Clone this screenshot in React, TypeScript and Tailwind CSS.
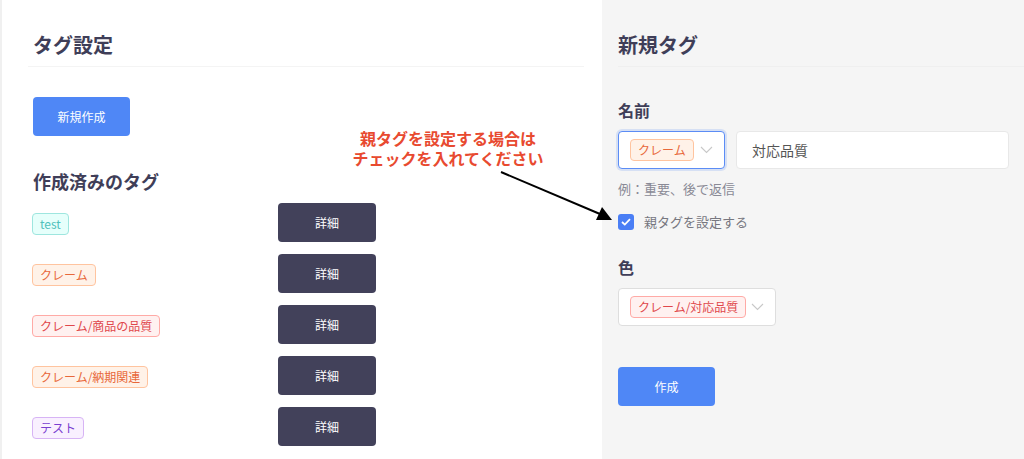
import React from "react";

const FONT = { fontFamily: '"Noto Sans CJK JP", "Noto Sans", sans-serif' };

type TagColor = "cyan" | "volcano" | "red" | "purple" | "gray";

const tagCls: Record<TagColor, string> = {
  cyan: "bg-[#e6fffb] border-[#9ee6df] text-[#4fc1bb]",
  volcano: "bg-[#fff2e8] border-[#ffc49f] text-[#e8683a]",
  red: "bg-[#fff1f0] border-[#ffaaa6] text-[#e0474b]",
  purple: "bg-[#f9f0ff] border-[#d7b4f5] text-[#7a3fd0]",
  gray: "bg-[#fafafa] border-[#e0e0e0] text-[#666]",
};

function Tag({ color, children }: { color: TagColor; children: React.ReactNode }) {
  return (
    <span
      className={`inline-flex items-center h-[22px] px-[7px] rounded-[4px] border text-[12px] leading-none ${tagCls[color]}`}
    >
      {children}
    </span>
  );
}

function Chevron() {
  return (
    <svg width="13" height="8" viewBox="0 0 13 8" fill="none">
      <polyline points="1,1 6.5,6.5 12,1" stroke="#c8c8c8" strokeWidth="1.1" />
    </svg>
  );
}

const rows: { label: string; color: TagColor }[] = [
  { label: "test", color: "cyan" },
  { label: "クレーム", color: "volcano" },
  { label: "クレーム/商品の品質", color: "red" },
  { label: "クレーム/納期関連", color: "volcano" },
  { label: "テスト", color: "purple" },
];

export default function App() {
  return (
    <div className="relative w-[1024px] h-[459px] overflow-hidden flex bg-white" style={FONT}>
      {/* Left panel */}
      <div className="w-[602px] h-full border-l-2 border-[#f0f0f0] pl-[26px] pr-[18px]">
        <div className="h-[67px] pt-[31px] border-b border-[#f4f4f4]">
          <h1 className="pl-[5px] text-[20px] leading-[28px] font-bold text-[#3f3e58]">タグ設定</h1>
        </div>
        <div className="pl-[5px]">
          <button className="mt-[30px] w-[97px] h-[39px] rounded-[4px] bg-[#4f87f6] text-white text-[12px]">
            新規作成
          </button>
          <h2 className="mt-[33px] text-[18px] leading-[24px] font-bold text-[#3f3e58]">作成済みのタグ</h2>
          <div className="mt-[10px] flex flex-col gap-[12px]">
            {rows.map((r) => (
              <div key={r.label} className="flex items-center">
                <div className="w-[246px] -ml-[1px]">
                  <Tag color={r.color}>{r.label}</Tag>
                </div>
                <button className="w-[98px] h-[39px] rounded-[4px] bg-[#42415a] text-white text-[12px]">
                  詳細
                </button>
              </div>
            ))}
            <div className="flex items-center h-[39px]">
              <div className="w-[246px] pl-[2px] pt-[8px]">
                <div className="w-[70px] h-[22px] rounded-[4px] border border-[#e4e4e4] bg-[#fafafa]" />
              </div>
            </div>
          </div>
        </div>
      </div>

      {/* Right panel */}
      <div className="flex-1 h-full bg-[#f5f5f5] pl-[16px]">
        <div className="h-[67px] pt-[31px] border-b border-[#efefef]">
          <h1 className="text-[20px] leading-[28px] font-bold text-[#3f3e58]">新規タグ</h1>
        </div>
        <div className="mt-[32px] text-[16px] leading-[22px] font-bold text-[#3f3e58]">名前</div>
        <div className="mt-[10px] flex gap-[11px]">
          <div className="w-[107px] h-[38px] rounded-[4px] bg-white border border-[#5b8cf5] shadow-[0_0_0_2px_rgba(79,135,246,0.18)] flex items-center pl-[11px] pr-[11px] justify-between">
            <Tag color="volcano">クレーム</Tag>
            <Chevron />
          </div>
          <div className="w-[273px] h-[38px] rounded-[4px] bg-white border border-[#e8e8e8] flex items-center pl-[15px] text-[14px] text-[#555]">
            対応品質
          </div>
        </div>
        <div className="mt-[11px] text-[13px] leading-[18px] text-[#8a8a96]">例：重要、後で返信</div>
        <div className="mt-[15px] flex items-center gap-[10px]">
          <div className="w-[16px] h-[16px] rounded-[3px] bg-[#4a7ef5] flex items-center justify-center">
            <svg width="10" height="8" viewBox="0 0 10 8" fill="none">
              <polyline points="1,4 3.8,6.6 9,1.2" stroke="white" strokeWidth="1.8" />
            </svg>
          </div>
          <span className="text-[13px] leading-[18px] text-[#77777f]">親タグを設定する</span>
        </div>
        <div className="mt-[25px] text-[16px] leading-[22px] font-bold text-[#3f3e58]">色</div>
        <div className="mt-[10px] w-[158px] h-[38px] rounded-[4px] bg-white border border-[#dedede] flex items-center pl-[11px] pr-[11px] justify-between">
          <Tag color="red">クレーム/対応品質</Tag>
          <Chevron />
        </div>
        <button className="mt-[41px] w-[97px] h-[39px] rounded-[4px] bg-[#4f87f6] text-white text-[12px]">
          作成
        </button>
      </div>

      {/* Annotation overlay */}
      <div className="absolute left-[338px] top-[128px] w-[220px] text-center text-[16px] leading-[20px] font-bold text-[#e84a30]">
        <div>親タグを設定する場合は</div>
        <div>チェックを入れてください</div>
      </div>
      <svg className="absolute left-0 top-0 pointer-events-none" width="1024" height="459">
        <line x1="501" y1="172" x2="600" y2="214" stroke="#000" strokeWidth="2" />
        <polygon points="612,220 596,220 602,207" fill="#000" />
      </svg>
    </div>
  );
}
